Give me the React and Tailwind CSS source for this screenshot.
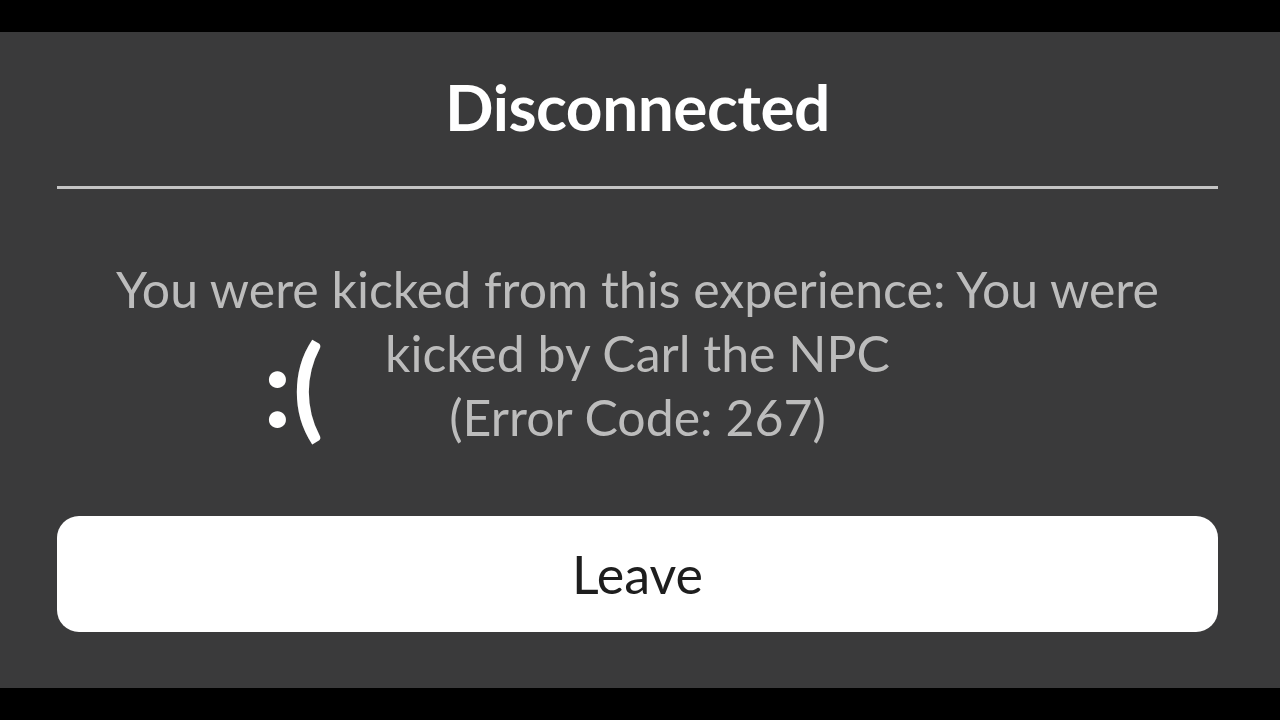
export default function App() {
  const font = { fontFamily: '"Lato", "Open Sans", sans-serif' };
  return (
    <div className="w-[1280px] h-[720px] bg-black flex flex-col" style={font}>
      <div className="h-[32px] shrink-0" />
      <div className="h-[656px] bg-[#3a3a3b] flex flex-col items-center pl-[57px] pr-[62px] relative">
        <div className="h-[154px] w-full flex items-center justify-center pb-[4px]">
          <h1 className="text-white font-bold text-[64px] leading-none tracking-[-0.5px]">Disconnected</h1>
        </div>
        <div className="w-full h-[3px] bg-[#c4c4c4]" />
        <div className="w-full pt-[68px] h-[327px] text-center text-[#bcbcbc] text-[50px] leading-[64px]">
          <p>You were kicked from this experience: You were</p>
          <p>kicked by Carl the NPC</p>
          <p>(Error Code: 267)</p>
        </div>
        <div className="absolute left-[263px] top-[296px] text-white font-bold text-[112px] leading-none tracking-[1px]">:(</div>
        <button className="w-full h-[116px] bg-white rounded-[22px] text-[#1e1e1e] text-[52px] flex items-center justify-center">
          Leave
        </button>
      </div>
      <div className="h-[32px] shrink-0" />
    </div>
  );
}
